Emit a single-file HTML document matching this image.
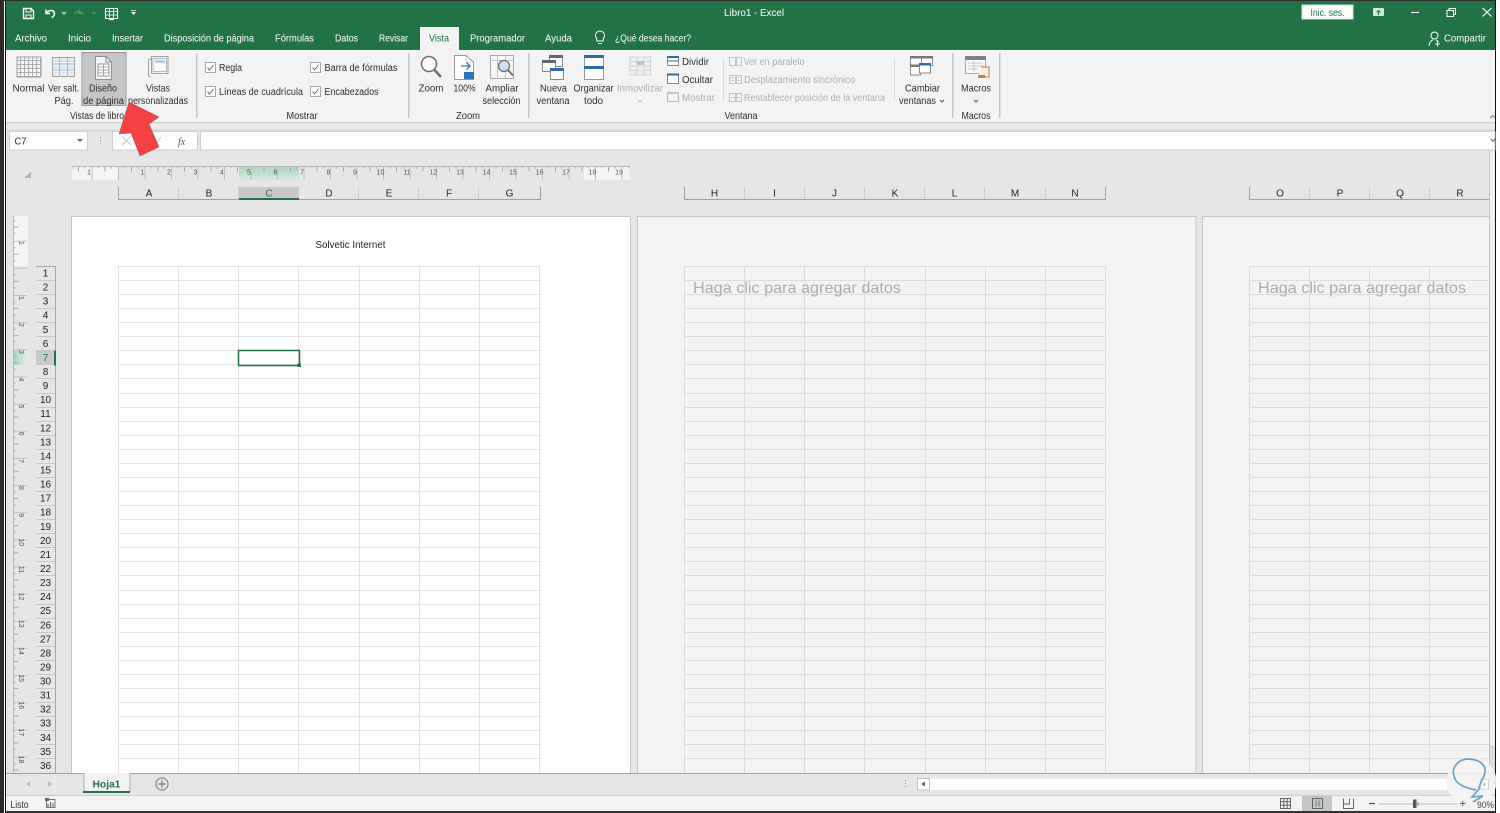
<!DOCTYPE html>
<html lang="es"><head><meta charset="utf-8"><title>Libro1 - Excel</title>
<style>
html,body{margin:0;padding:0;background:#fff;width:1500px;height:813px;overflow:hidden}
svg{display:block}
text{font-family:"Liberation Sans",sans-serif;font-size:10px;fill:#2e2e2e}
.w{fill:#fff}.c{text-anchor:middle}.g{fill:#b0b0b0}
.h{font-size:10px;fill:#222;text-anchor:middle}
.r{font-size:10px;fill:#222;text-anchor:middle}
.t{font-size:7px;fill:#555;text-anchor:middle}
</style></head><body>
<svg width="1500" height="813" viewBox="0 0 1500 813" xmlns="http://www.w3.org/2000/svg">
<defs>
<path id="hl" d="M0 .5H421M0 14.500H421M0 28.500H421M0 42.500H421M0 56.500H421M0 70.500H421M0 84.500H421M0 98.500H421M0 112.500H421M0 127.500H421M0 141.500H421M0 155.500H421M0 169.500H421M0 183.500H421M0 197.500H421M0 211.500H421M0 225.500H421M0 239.500H421M0 253.500H421M0 267.500H421M0 281.500H421M0 295.500H421M0 309.500H421M0 324.500H421M0 338.500H421M0 352.500H421M0 366.500H421M0 380.500H421M0 394.500H421M0 408.500H421M0 422.500H421M0 436.500H421M0 450.500H421M0 464.500H421M0 478.500H421M0 492.500H421"/>
<path id="vl" d="M.5 0V507M60.500 0V507M120.500 0V507M180.500 0V507M241.500 0V507M301.500 0V507M361.500 0V507M421.500 0V507"/>
<pattern id="rt" x="91.500" y="166" width="26.500" height="14" patternUnits="userSpaceOnUse"><path d="M.5 0V14" stroke="#c2c2c2" fill="none"/><path d="M7 0V2.500M20 0V2.500" stroke="#b0b0b0" fill="none"/><path d="M13.500 0V5.500" stroke="#a8a8a8" fill="none"/></pattern>
<pattern id="rv" x="13" y="295" width="14" height="27.150" patternUnits="userSpaceOnUse"><path d="M0 .5H14" stroke="#c2c2c2" fill="none"/><path d="M0 7H2.500M0 20H2.500" stroke="#b0b0b0" fill="none"/><path d="M0 13.500H5.500" stroke="#a8a8a8" fill="none"/></pattern>
<pattern id="mg" x="0" y="0" width="4" height="4" patternUnits="userSpaceOnUse"><path d="M.5 0V4M0 .5H4" stroke="#a0a0a0" stroke-width=".8" fill="none"/></pattern>
<linearGradient id="gr" x1="0" y1="0" x2="0" y2="1"><stop offset="0" stop-color="#a8d5be"/><stop offset="1" stop-color="#d5e9de"/></linearGradient>
<linearGradient id="gv" x1="0" y1="0" x2="1" y2="0"><stop offset="0" stop-color="#a8d5be"/><stop offset="1" stop-color="#e0ebe5"/></linearGradient>
</defs>

<!-- base -->
<rect width="1500" height="813" fill="#fff"/>
<rect x="0" y="0" width="4" height="813" fill="#2b2b2b"/>
<rect x="5" y="0" width="1" height="813" fill="#111"/>
<rect x="6" y="1" width="1490" height="811" fill="#e6e6e6"/>
<rect x="0" y="0" width="1496" height="1" fill="#2b2b2b"/>
<rect x="6" y="811" width="1490" height="2" fill="#333"/>
<rect x="1495" y="0" width="1" height="813" fill="#111"/>

<!-- title bar -->
<rect x="6" y="1" width="1489" height="49" fill="#217346"/>
<g fill="none" stroke="#fff">
<path d="M23.500 8.500H31L33.500 11V18.500H23.500Z" stroke-width="1.400"/><path d="M26 9V12H31V9M26 18V15H31V18" stroke-width="1"/>
<path d="M46 9.500L46 13.500H50M46.500 13C48 10.500 52.500 9.500 54 12C55.300 14.500 53.500 17 51.500 17.500" stroke-width="1.500"/>
<path d="M62 12L64 14L66 12" stroke-width=".9"/>
<path d="M82.500 13.500C78.500 9.500 75.500 12 75 14M79 9.500V13.500H83.500" stroke="#4f9a72" stroke-width="1.300"/>
<path d="M92 12L94 14L96 12" stroke="#5b9b78" stroke-width=".9"/>
<rect x="105.500" y="8.500" width="12" height="10" stroke-width="1.100"/><path d="M105.500 11.500H117.500M105.500 15H117.500M109.500 8.500V18.500M113.500 8.500V18.500" stroke-width=".8"/><path d="M109 19.500H114" stroke-width="1.300"/>
</g>
<path d="M131 12H136L133.500 15Z M131 10H136V10.800H131Z" fill="#fff"/>
<text class="w c" x="754" y="16" textLength="60" lengthAdjust="spacingAndGlyphs">Libro1  -  Excel</text>
<rect x="1302" y="5" width="51" height="14" fill="#fff" stroke="#cfe3d8"/>
<text x="1327.500" y="16" class="c" style="fill:#217346" textLength="34" lengthAdjust="spacingAndGlyphs">Inic. ses.</text>
<rect x="1373" y="8" width="11" height="8" fill="#d6e8de" rx="1"/><path d="M1378.500 15V10.500M1376.500 12.500L1378.500 10.500L1380.500 12.500" stroke="#217346" fill="none"/>
<path d="M1411 12.500H1419" stroke="#fff" stroke-width="1.100"/>
<path d="M1447 10.500H1453.500V16.500H1447ZM1449 10V8.500H1455.500V14.500H1454" stroke="#fff" fill="none"/>
<path d="M1482.500 8L1491.500 16.500M1491.500 8L1482.500 16.500" stroke="#fff" stroke-width="1.100"/>

<!-- tabs -->
<rect x="420" y="27" width="39" height="24" fill="#f3f3f3"/>
<text class="w" x="15" y="41.500" textLength="32" lengthAdjust="spacingAndGlyphs">Archivo</text>
<text class="w" x="68" y="41.500" textLength="23" lengthAdjust="spacingAndGlyphs">Inicio</text>
<text class="w" x="112" y="41.500" textLength="31" lengthAdjust="spacingAndGlyphs">Insertar</text>
<text class="w" x="164" y="41.500" textLength="90" lengthAdjust="spacingAndGlyphs">Disposición de página</text>
<text class="w" x="275" y="41.500" textLength="39" lengthAdjust="spacingAndGlyphs">Fórmulas</text>
<text class="w" x="335" y="41.500" textLength="23" lengthAdjust="spacingAndGlyphs">Datos</text>
<text class="w" x="379" y="41.500" textLength="29" lengthAdjust="spacingAndGlyphs">Revisar</text>
<text style="fill:#217346" x="429" y="41.500" textLength="20" lengthAdjust="spacingAndGlyphs">Vista</text>
<text class="w" x="470" y="41.500" textLength="55" lengthAdjust="spacingAndGlyphs">Programador</text>
<text class="w" x="545" y="41.500" textLength="27" lengthAdjust="spacingAndGlyphs">Ayuda</text>
<text class="w" x="615" y="41.500" textLength="76" lengthAdjust="spacingAndGlyphs">¿Qué desea hacer?</text>
<text class="w" x="1444" y="41.500" textLength="42" lengthAdjust="spacingAndGlyphs">Compartir</text>
<path d="M597 41C597 38 595.500 37.500 595.500 35.500A4.500 4.500 0 0 1 604.500 35.500C604.500 37.500 603 38 603 41ZM598 43.500H602" stroke="#fff" fill="none"/>
<circle cx="1434.500" cy="35.500" r="3.500" stroke="#fff" fill="none"/><path d="M1429 46C1429.500 42 1431 40.500 1433 40M1436 40C1437 40.300 1438 41 1438.500 42M1435 44H1440M1437.500 41.500V46.500" stroke="#fff" fill="none"/>

<!-- ribbon -->
<rect x="6" y="50" width="1489" height="72" fill="#f3f3f3"/>
<rect x="6" y="122" width="1489" height="1.500" fill="#d4d4d4"/>
<rect x="6" y="123.500" width="1489" height="6" fill="#ececec"/>
<rect x="6" y="129.500" width="1489" height="1" fill="#cfcfcf"/>
<rect x="82" y="52.500" width="44" height="53" fill="#c6c6c6" stroke="#9a9a9a"/>
<g fill="#c6c6c6"><rect x="196" y="53" width="1.500" height="65"/><rect x="408" y="53" width="1.500" height="65"/><rect x="528" y="53" width="1.500" height="65"/><rect x="952" y="53" width="1.500" height="65"/><rect x="999" y="53" width="1.500" height="65"/></g>
<rect x="723" y="58" width="1" height="43" fill="#dcdcdc"/><rect x="894" y="58" width="1" height="43" fill="#dcdcdc"/>
<path d="M1490 118L1493 115.500L1495 118" stroke="#777" fill="none"/>

<!-- view icons -->
<rect x="17" y="57" width="24" height="20" fill="#f4f4f4"/><rect x="17" y="57" width="24" height="20" fill="url(#mg)" stroke="#a0a0a0"/>
<rect x="52.500" y="57.500" width="22" height="19" fill="#eaf0f7" stroke="#a0a0a0"/><path d="M52.500 64H74.500M52.500 70H74.500M59.500 57.500V76.500M67.500 57.500V76.500" stroke="#9dbbd9" fill="none"/><path d="M52.500 61H74.500M52.500 67H74.500M52.500 73H74.500" stroke="#c3d0dc" fill="none" stroke-width=".7"/>
<path d="M95.500 56.500H106L111.500 62V79.500H95.500Z" fill="#f4f4f4" stroke="#8f8f8f"/><path d="M106 56.500V62H111.500" fill="none" stroke="#8f8f8f"/><rect x="98" y="64" width="11" height="12" fill="#fff" stroke="#9a9a9a"/><path d="M98 67H109M98 70H109M98 73H109M103.500 64V76" stroke="#a8a8a8"/>
<path d="M148.500 59.500V76.500H151M148.500 59.500H151M168 56.500H151.500V73.500H168Z" fill="none" stroke="#a0a0a0"/><rect x="153" y="58.500" width="13.500" height="13" fill="#fbfbfb" stroke="#b8b8b8"/><rect x="155" y="60" width="10" height="3" fill="#b7cfe6"/>

<text class="c" x="28.500" y="91.500" textLength="32" lengthAdjust="spacingAndGlyphs">Normal</text>
<text class="c" x="63.500" y="91.500" textLength="31" lengthAdjust="spacingAndGlyphs">Ver salt.</text>
<text class="c" x="64" y="104" textLength="19" lengthAdjust="spacingAndGlyphs">Pág.</text>
<text class="c" x="103" y="91.500" textLength="28" lengthAdjust="spacingAndGlyphs">Diseño</text>
<text class="c" x="103.500" y="104" textLength="41" lengthAdjust="spacingAndGlyphs">de página</text>
<text class="c" x="158" y="91.500" textLength="24" lengthAdjust="spacingAndGlyphs">Vistas</text>
<text class="c" x="158" y="104" textLength="60" lengthAdjust="spacingAndGlyphs">personalizadas</text>
<text class="c" x="97" y="119" textLength="54" lengthAdjust="spacingAndGlyphs">Vistas de libro</text>
<text class="c" x="302" y="119" textLength="31" lengthAdjust="spacingAndGlyphs">Mostrar</text>
<text class="c" x="468" y="119" textLength="24" lengthAdjust="spacingAndGlyphs">Zoom</text>
<text class="c" x="741" y="119" textLength="33" lengthAdjust="spacingAndGlyphs">Ventana</text>
<text class="c" x="976" y="119" textLength="29" lengthAdjust="spacingAndGlyphs">Macros</text>

<!-- checkboxes -->
<g fill="#fff" stroke="#a8a8a8"><rect x="205.500" y="62.500" width="10" height="10"/><rect x="205.500" y="86.500" width="10" height="10"/><rect x="310.500" y="62.500" width="10" height="10"/><rect x="310.500" y="86.500" width="10" height="10"/></g>
<g fill="none" stroke="#666"><path d="M207.500 67.500L209.500 70L213.500 65"/><path d="M207.500 91.500L209.500 94L213.500 89"/><path d="M312.500 67.500L314.500 70L318.500 65"/><path d="M312.500 91.500L314.500 94L318.500 89"/></g>
<text x="219" y="71" textLength="23" lengthAdjust="spacingAndGlyphs">Regla</text>
<text x="219" y="95" textLength="84" lengthAdjust="spacingAndGlyphs">Líneas de cuadrícula</text>
<text x="324.500" y="71" textLength="73" lengthAdjust="spacingAndGlyphs">Barra de fórmulas</text>
<text x="324.500" y="95" textLength="54" lengthAdjust="spacingAndGlyphs">Encabezados</text>

<!-- zoom icons -->
<circle cx="429" cy="64" r="7.500" fill="#fafafa" stroke="#707070" stroke-width="1.500"/><path d="M434.500 70L441 77" stroke="#707070" stroke-width="2.500"/>
<path d="M454.500 55.500H466L473.500 62V79.500H454.500Z" fill="#fff" stroke="#9a9a9a"/><path d="M466 56V62H474" fill="none" stroke="#bbb" stroke-dasharray="2 1"/><path d="M461 66H470M466.500 62.500L470 66L466.500 69.500" fill="none" stroke="#2e75b6" stroke-width="1.300"/><rect x="464" y="72" width="10" height="7" fill="#2e75b6"/>
<rect x="490.500" y="55.500" width="23" height="23" fill="#f7f7f7" stroke="#a8a8a8"/><path d="M490.500 60.500H513.500M497.500 55.500V78.500M505.500 55.500V78.500" stroke="#c4c4c4"/><circle cx="504" cy="66" r="5.500" fill="#cddff0" stroke="#707070" stroke-width="1.300"/><path d="M508 70L513 75.500" stroke="#707070" stroke-width="2"/>
<text class="c" x="431" y="91.500" textLength="25" lengthAdjust="spacingAndGlyphs">Zoom</text>
<text class="c" x="464.500" y="91.500" textLength="22" lengthAdjust="spacingAndGlyphs">100%</text>
<text class="c" x="502" y="91.500" textLength="33" lengthAdjust="spacingAndGlyphs">Ampliar</text>
<text class="c" x="501.500" y="104" textLength="38" lengthAdjust="spacingAndGlyphs">selección</text>

<!-- ventana icons -->
<rect x="549.500" y="55.500" width="13" height="11" fill="#fff" stroke="#888"/><rect x="549" y="55" width="14" height="3" fill="#666"/>
<rect x="542.500" y="60.500" width="13" height="11" fill="#fff" stroke="#888"/><rect x="542" y="60" width="14" height="3" fill="#666"/>
<rect x="550.500" y="68.500" width="13" height="11" fill="#fff" stroke="#888"/><rect x="550" y="68" width="14" height="3" fill="#2e6da4"/>
<rect x="584.500" y="55.500" width="19" height="24" fill="#fff" stroke="#999"/><rect x="584" y="55" width="20" height="3" fill="#2e6da4"/><rect x="584" y="66" width="20" height="3" fill="#2e6da4"/>
<rect x="630" y="57" width="20.500" height="18" fill="#efefef" stroke="#d4d4d4"/><path d="M630 61.500H650M630 66H650M630 70.500H650M637 57V75M644 57V75" stroke="#d4d4d4" fill="none"/><rect x="637" y="61" width="7" height="4" fill="#c4c4c4"/>
<text class="c" x="553.500" y="91.500" textLength="27" lengthAdjust="spacingAndGlyphs">Nueva</text>
<text class="c" x="553" y="104" textLength="33" lengthAdjust="spacingAndGlyphs">ventana</text>
<text class="c" x="593.500" y="91.500" textLength="40" lengthAdjust="spacingAndGlyphs">Organizar</text>
<text class="c" x="593.500" y="104" textLength="19" lengthAdjust="spacingAndGlyphs">todo</text>
<text class="c g" x="640" y="91.500" textLength="46" lengthAdjust="spacingAndGlyphs">Inmovilizar</text>
<path d="M638 100L640 102L642 100" fill="none" stroke="#c0c0c0"/>

<rect x="667.500" y="56.500" width="11" height="9" fill="#fff" stroke="#888"/><rect x="667" y="56" width="12" height="2" fill="#2e6da4"/><path d="M667.500 61H678.500" stroke="#2e6da4"/>
<rect x="667.500" y="74.500" width="11" height="9" fill="#fff" stroke="#888"/><rect x="667" y="73.500" width="12" height="2" fill="#2e6da4"/>
<rect x="667.500" y="92.500" width="11" height="9" fill="#f5f5f5" stroke="#b8b8b8"/><rect x="667" y="92" width="12" height="2" fill="#c4c4c4"/>
<text x="682" y="65" textLength="27" lengthAdjust="spacingAndGlyphs">Dividir</text>
<text x="682" y="83" textLength="31" lengthAdjust="spacingAndGlyphs">Ocultar</text>
<text class="g" x="682" y="101" textLength="33" lengthAdjust="spacingAndGlyphs">Mostrar</text>
<g fill="none" stroke="#c4c4c4"><path d="M729.500 57.500H735.500V65.500H729.500ZM736.500 57.500H741.500V65.500H736.500Z"/><path d="M729.500 75.500H735.500V83.500H729.500ZM736.500 75.500H741.500V83.500H736.500ZM731 78H734M731 80.500H734M738 78H740M738 80.500H740"/><path d="M729.500 93.500H735.500V101.500H729.500ZM736.500 93.500H741.500V101.500H736.500ZM731 97.500H740"/></g>
<text class="g" x="743.500" y="65" textLength="61" lengthAdjust="spacingAndGlyphs">Ver en paralelo</text>
<text class="g" x="744" y="83" textLength="111" lengthAdjust="spacingAndGlyphs">Desplazamiento sincrónico</text>
<text class="g" x="744" y="101" textLength="141" lengthAdjust="spacingAndGlyphs">Restablecer posición de la ventana</text>

<rect x="910.500" y="56.500" width="14" height="10" fill="#fff" stroke="#888"/><rect x="910" y="56" width="15" height="2.500" fill="#777"/>
<rect x="921.500" y="56.500" width="11" height="9" fill="#fff" stroke="#888"/><rect x="921" y="56" width="12" height="2.500" fill="#777"/>
<rect x="910.500" y="65.500" width="10" height="9.500" fill="#fff" stroke="#888"/><rect x="910" y="64.500" width="11" height="2.500" fill="#777"/>
<rect x="919.500" y="63.500" width="11" height="9.500" fill="#fff" stroke="#888"/><rect x="919" y="63" width="12" height="2.500" fill="#2e6da4"/>
<text class="c" x="922.500" y="91.500" textLength="35" lengthAdjust="spacingAndGlyphs">Cambiar</text>
<text class="c" x="917.500" y="104" textLength="37" lengthAdjust="spacingAndGlyphs">ventanas</text>
<path d="M940 100L942 102L944 100" fill="none" stroke="#555"/>
<rect x="965.500" y="56.500" width="20" height="17" fill="#fafafa" stroke="#aaa"/><rect x="965" y="56" width="21" height="4" fill="#808080"/><path d="M968 63H983M968 66H983M968 69H978M974 61V72" stroke="#c8c8c8" fill="none"/>
<path d="M981 67H989V77H979V75" fill="#fbeedd" stroke="#b78348"/><path d="M978 75H985V78H978Z" fill="#b78348"/>
<text class="c" x="976" y="91.500" textLength="30" lengthAdjust="spacingAndGlyphs">Macros</text>
<path d="M974 100L976 102L978 100" fill="none" stroke="#555"/>

<!-- formula bar -->
<rect x="9.500" y="131.500" width="78" height="18.500" fill="#fff" stroke="#d0d0d0"/>
<text x="14.500" y="144.500" textLength="12" lengthAdjust="spacingAndGlyphs">C7</text>
<path d="M77 139L83 139L80 142Z" fill="#666"/>
<path d="M100.500 137V138M100.500 140V141M100.500 143V144" stroke="#999"/>
<rect x="112.500" y="131.500" width="85" height="18.500" fill="#fff" stroke="#d0d0d0"/>
<path d="M122 136L131 145M131 136L122 145" stroke="#c8c8c8" fill="none"/>
<path d="M153 141L156 144L161 137" stroke="#c8c8c8" fill="none"/>
<text x="178" y="145" style="font-family:'Liberation Serif',serif;font-style:italic;fill:#555;font-size:10px">fx</text>
<rect x="200.500" y="131.500" width="1294.500" height="18.500" fill="#fff" stroke="#d0d0d0"/>
<path d="M1491 139L1493 141.500L1495 139" stroke="#555" fill="none"/>

<!-- sheet corner -->
<path d="M31 171.500V178H24Z" fill="#b5b5b5"/>

<!-- horizontal ruler -->
<rect x="72" y="166" width="46" height="14" fill="#f4f4f4"/>
<rect x="584" y="166" width="46" height="14" fill="#f4f4f4"/>
<rect x="239" y="166" width="60" height="14" fill="url(#gr)"/>
<rect x="72" y="166" width="558" height="14" fill="url(#rt)"/>
<path d="M72 166.500H630" stroke="#b8b8b8"/>
<text class="t" x="89" y="174.500">1</text><text class="t" x="142.500" y="174.500">1</text><text class="t" x="169" y="174.500">2</text><text class="t" x="195.500" y="174.500">3</text><text class="t" x="222" y="174.500">4</text><text class="t" x="249" y="174.500">5</text><text class="t" x="275.500" y="174.500">6</text><text class="t" x="302" y="174.500">7</text><text class="t" x="328.500" y="174.500">8</text><text class="t" x="355" y="174.500">9</text><text class="t" x="380.500" y="174.500">10</text><text class="t" x="407" y="174.500">11</text><text class="t" x="433.500" y="174.500">12</text><text class="t" x="460" y="174.500">13</text><text class="t" x="486.500" y="174.500">14</text><text class="t" x="513" y="174.500">15</text><text class="t" x="539.500" y="174.500">16</text><text class="t" x="566" y="174.500">17</text><text class="t" x="592.500" y="174.500">18</text><text class="t" x="619" y="174.500">19</text>

<!-- column headers -->
<rect x="239" y="187" width="60" height="11" fill="#c9c9c9"/>
<path d="M178.500 187V199M238.500 187V199M298.500 187V199M358.500 187V199M418.500 187V199M478.500 187V199" stroke="#cdcdcd" fill="none"/>
<path d="M744.500 187V199M804.500 187V199M864.500 187V199M924.500 187V199M984.500 187V199M1045.500 187V199" stroke="#cdcdcd" fill="none"/>
<path d="M1309.500 187V199M1369.500 187V199M1429.500 187V199M1489.500 187V199" stroke="#cdcdcd" fill="none"/>
<path d="M118.500 187V199.500H540.500V187M684.500 187V199.500H1105.500V187M1249.500 187V199.500H1490" stroke="#a0a0a0" fill="none"/>
<rect x="239" y="198" width="60" height="2" fill="#217346"/>
<text class="h" x="149" y="196.500">A</text><text class="h" x="209" y="196.500">B</text><text class="h" x="269" y="196.500" style="fill:#217346">C</text><text class="h" x="329" y="196.500">D</text><text class="h" x="389" y="196.500">E</text><text class="h" x="449" y="196.500">F</text><text class="h" x="509.500" y="196.500">G</text>
<text class="h" x="714.500" y="196.500">H</text><text class="h" x="774.500" y="196.500">I</text><text class="h" x="834.500" y="196.500">J</text><text class="h" x="895" y="196.500">K</text><text class="h" x="954.500" y="196.500">L</text><text class="h" x="1015" y="196.500">M</text><text class="h" x="1075" y="196.500">N</text>
<text class="h" x="1280" y="196.500">O</text><text class="h" x="1340" y="196.500">P</text><text class="h" x="1400" y="196.500">Q</text><text class="h" x="1460" y="196.500">R</text>

<!-- pages -->
<rect x="71.500" y="216.500" width="559" height="557" fill="#fff" stroke="#c8c8c8"/>
<rect x="637.500" y="216.500" width="558.500" height="557" fill="#f3f3f3" stroke="#c8c8c8"/>
<rect x="1202.500" y="216.500" width="287.500" height="557" fill="#f3f3f3" stroke="#c8c8c8"/>
<text class="c" x="350.500" y="248" style="fill:#222" textLength="70" lengthAdjust="spacingAndGlyphs">Solvetic Internet</text>
<g stroke="#e3e3e3" fill="none"><use href="#hl" x="118.500" y="266"/><use href="#vl" x="118" y="266"/></g>
<g stroke="#dcdcdc" fill="none"><use href="#hl" x="684.500" y="266"/><use href="#vl" x="684" y="266"/></g>
<svg x="1249" y="266" width="241" height="507"><g stroke="#dcdcdc" fill="none"><use href="#hl" x="0" y="0"/><use href="#vl" x="0" y="0"/></g></svg>
<text x="693" y="293" style="font-size:16px;fill:#adadad" textLength="208" lengthAdjust="spacingAndGlyphs">Haga clic para agregar datos</text>
<text x="1258" y="293" style="font-size:16px;fill:#adadad" textLength="208" lengthAdjust="spacingAndGlyphs">Haga clic para agregar datos</text>
<rect x="238.500" y="350.500" width="61" height="15" fill="none" stroke="#217346" stroke-width="1.500"/>
<rect x="297.500" y="363.500" width="3.500" height="3.500" fill="#217346"/>

<!-- vertical ruler -->
<rect x="13" y="216" width="15" height="50" fill="#f4f4f4"/>
<rect x="13" y="350" width="14" height="15" fill="url(#gv)"/>
<rect x="13" y="216" width="14" height="557" fill="url(#rv)"/>
<path d="M13.500 216V773" stroke="#b8b8b8"/>
<text class="t" transform="translate(19 243) rotate(90)">1</text>
<text class="t" transform="translate(19 298) rotate(90)">1</text><text class="t" transform="translate(19 325) rotate(90)">2</text><text class="t" transform="translate(19 352) rotate(90)">3</text><text class="t" transform="translate(19 379.500) rotate(90)">4</text><text class="t" transform="translate(19 406.500) rotate(90)">5</text><text class="t" transform="translate(19 433.700) rotate(90)">6</text><text class="t" transform="translate(19 460.900) rotate(90)">7</text><text class="t" transform="translate(19 488) rotate(90)">8</text><text class="t" transform="translate(19 515.200) rotate(90)">9</text><text class="t" transform="translate(19 542.300) rotate(90)">10</text><text class="t" transform="translate(19 569.500) rotate(90)">11</text><text class="t" transform="translate(19 596.600) rotate(90)">12</text><text class="t" transform="translate(19 623.800) rotate(90)">13</text><text class="t" transform="translate(19 650.900) rotate(90)">14</text><text class="t" transform="translate(19 678.100) rotate(90)">15</text><text class="t" transform="translate(19 705.200) rotate(90)">16</text><text class="t" transform="translate(19 732.400) rotate(90)">17</text><text class="t" transform="translate(19 759.500) rotate(90)">18</text>

<!-- row headers -->
<rect x="36" y="350" width="19" height="14" fill="#c9c9c9"/>
<path d="M36 266.500H55.500V773" stroke="#a8a8a8" fill="none"/>
<g stroke="#c8c8c8"><path d="M36 280.500H55M36 294.500H55M36 308.500H55M36 322.500H55M36 336.500H55M36 350.500H55M36 364.500H55M36 378.500H55M36 393.500H55M36 407.500H55M36 421.500H55M36 435.500H55M36 449.500H55M36 463.500H55M36 477.500H55M36 491.500H55M36 505.500H55M36 519.500H55M36 533.500H55M36 547.500H55M36 561.500H55M36 575.500H55M36 590.500H55M36 604.500H55M36 618.500H55M36 632.500H55M36 646.500H55M36 660.500H55M36 674.500H55M36 688.500H55M36 702.500H55M36 716.500H55M36 730.500H55M36 744.500H55M36 758.500H55"/></g>
<rect x="54" y="350.500" width="2" height="15" fill="#217346"/>
<text class="r" x="45.500" y="276.500">1</text><text class="r" x="45.500" y="290.600">2</text><text class="r" x="45.500" y="304.600">3</text><text class="r" x="45.500" y="318.700">4</text><text class="r" x="45.500" y="332.800">5</text><text class="r" x="45.500" y="346.900">6</text><text class="r" x="45.500" y="360.900" style="fill:#217346">7</text><text class="r" x="45.500" y="375">8</text><text class="r" x="45.500" y="389.100">9</text><text class="r" x="45.500" y="403.100">10</text><text class="r" x="45.500" y="417.200">11</text><text class="r" x="45.500" y="431.300">12</text><text class="r" x="45.500" y="445.300">13</text><text class="r" x="45.500" y="459.400">14</text><text class="r" x="45.500" y="473.500">15</text><text class="r" x="45.500" y="487.600">16</text><text class="r" x="45.500" y="501.600">17</text><text class="r" x="45.500" y="515.700">18</text><text class="r" x="45.500" y="529.800">19</text><text class="r" x="45.500" y="543.800">20</text><text class="r" x="45.500" y="557.900">21</text><text class="r" x="45.500" y="572">22</text><text class="r" x="45.500" y="586">23</text><text class="r" x="45.500" y="600.100">24</text><text class="r" x="45.500" y="614.200">25</text><text class="r" x="45.500" y="628.300">26</text><text class="r" x="45.500" y="642.300">27</text><text class="r" x="45.500" y="656.400">28</text><text class="r" x="45.500" y="670.500">29</text><text class="r" x="45.500" y="684.500">30</text><text class="r" x="45.500" y="698.600">31</text><text class="r" x="45.500" y="712.700">32</text><text class="r" x="45.500" y="726.700">33</text><text class="r" x="45.500" y="740.800">34</text><text class="r" x="45.500" y="754.900">35</text><text class="r" x="45.500" y="769">36</text>

<!-- vertical scrollbar -->
<rect x="1490" y="151" width="5" height="622" fill="#f0f0f0"/>
<path d="M1489.500 151V773" stroke="#c4c4c4"/>
<rect x="1490" y="745" width="5" height="28" fill="#dcdcdc"/>

<!-- sheet bar -->
<rect x="6" y="773" width="1489" height="23" fill="#e6e6e6"/>
<path d="M6 773.500H1495" stroke="#a0a0a0"/>
<path d="M6 795.500H1495" stroke="#cfcfcf"/>
<rect x="84" y="773" width="46" height="19" fill="#f2f2f2"/>
<rect x="83.500" y="773" width="1" height="19" fill="#b0b0b0"/><rect x="129.500" y="773" width="1" height="19" fill="#b0b0b0"/>
<rect x="83" y="791" width="47" height="2" fill="#217346"/>
<text class="c" x="106.500" y="787.500" style="font-size:10.500px;font-weight:bold;fill:#217346" textLength="28" lengthAdjust="spacingAndGlyphs">Hoja1</text>
<path d="M30 781L26 784L30 787ZM48 781L52 784L48 787Z" fill="#c0c0c0"/>
<circle cx="162" cy="784" r="6" fill="none" stroke="#888" stroke-width="1.200"/><path d="M158.500 784H165.500M162 780.500V787.500" stroke="#777" stroke-width="1.200"/>
<path d="M905.500 780V781M905.500 783V784M905.500 786V787" stroke="#888"/>
<rect x="917.500" y="778.500" width="12" height="11.500" fill="#fff" stroke="#c0c0c0"/>
<path d="M925 781.500L921 784L925 786.500Z" fill="#666"/>
<rect x="930" y="778.500" width="517" height="11.500" fill="#fff"/>

<!-- status bar -->
<rect x="6" y="796" width="1489" height="15" fill="#f3f3f3"/>
<text x="10.500" y="808" textLength="18" lengthAdjust="spacingAndGlyphs">Listo</text>
<rect x="46.500" y="799.500" width="8.500" height="8" fill="none" stroke="#777"/><rect x="45" y="798" width="4" height="3" fill="#666"/><path d="M48 807V804M50.500 807V802M53 807V803" stroke="#555"/>
<rect x="1302" y="796" width="30" height="15" fill="#c6c6c6"/>
<path d="M1280.500 798.500H1290.500V808.500H1280.500ZM1280.500 801.800H1290.500M1280.500 805.200H1290.500M1283.800 798.500V808.500M1287.200 798.500V808.500" stroke="#666" fill="none"/>
<rect x="1312.500" y="798.500" width="10" height="10" fill="none" stroke="#666"/><path d="M1316 800.500V806.500M1319 800.500V806.500" stroke="#4d8f6c"/>
<path d="M1343.500 798.500V808.500H1353.500V798.500M1349.500 798.500V804H1343.500" stroke="#666" fill="none"/>
<path d="M1369 803.500H1375" stroke="#555" stroke-width="1.200"/>
<path d="M1379 804H1457" stroke="#bdbdbd"/>
<path d="M1418 802V806" stroke="#888"/>
<rect x="1413" y="799.500" width="3.500" height="8.500" fill="#555"/>

<!-- watermark -->
<circle cx="1471.500" cy="781.500" r="25" fill="#f4f4f4" fill-opacity=".9"/>
<rect x="1480.500" y="779.500" width="8" height="9.500" fill="#fff" stroke="#d8d8d8"/>
<path d="M1483.500 782L1486 784.300L1483.500 786.500Z" fill="#aaa"/>
<path d="M1460 803.500H1465.500M1462.700 800.700V806.300" stroke="#666"/>
<path d="M1476 790C1468 788 1456 786 1454 776C1451 766 1460 759 1468 759C1478 759 1486 764 1485 772C1484 778 1480 782 1479 789L1472 797L1483 796L1473 802" fill="none" stroke="#6ba3c6" stroke-width="1.700"/>
<text x="1477" y="808" style="fill:#444;font-size:9.500px" textLength="17" lengthAdjust="spacingAndGlyphs">90%</text>

<!-- red arrow -->
<path d="M129 102L159 117L149 124L159 147L140 156L131 133L119 134Z" fill="#f54141" stroke="#8c5a5a" stroke-width=".5"/>
</svg>
</body></html>
